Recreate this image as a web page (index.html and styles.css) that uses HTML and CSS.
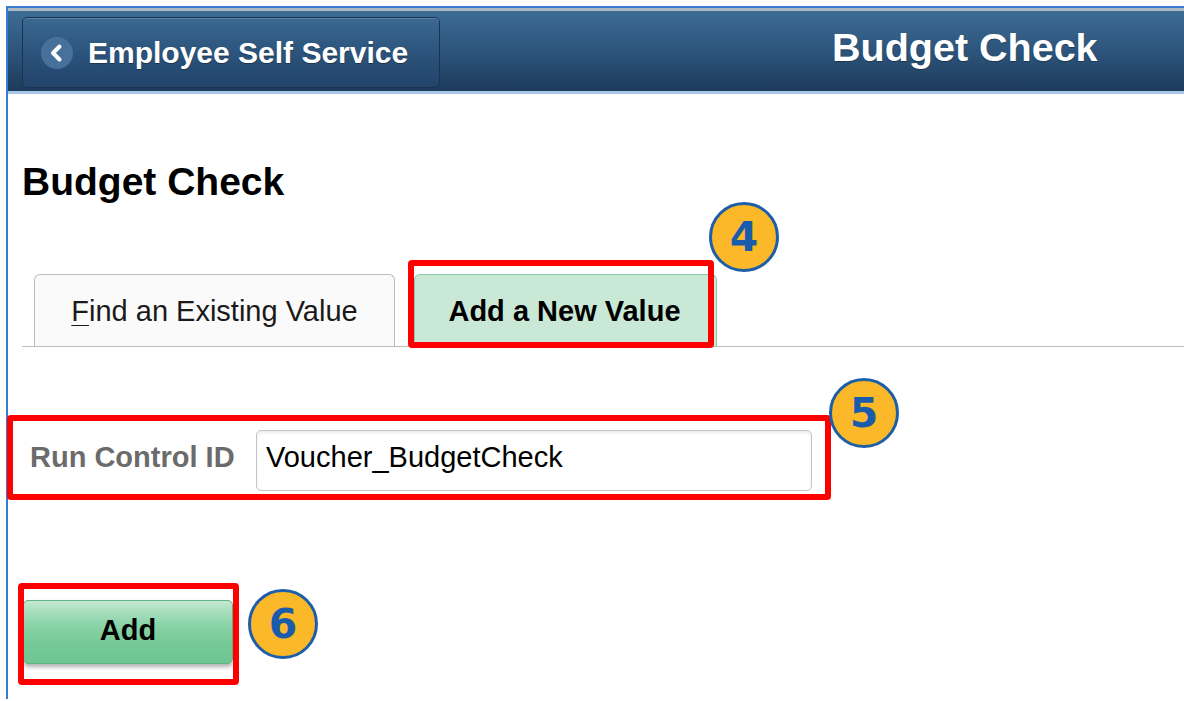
FILE: index.html
```html
<!DOCTYPE html>
<html lang="en">
<head>
<meta charset="utf-8">
<title>Budget Check</title>
<link rel="stylesheet" href="styles.css">
</head>
<body>
<div class="frame">
  <header class="banner">
    <a class="back-btn" href="#">
      <span class="back-icon">
        <svg width="32" height="32" viewBox="0 0 32 32" aria-hidden="true">
          <circle cx="16" cy="16" r="16" fill="#47719a"/>
          <path d="M18.5 9.5 L12 16 L18.5 22.5" fill="none" stroke="#ffffff" stroke-width="4" stroke-linecap="round" stroke-linejoin="round"/>
        </svg>
      </span>
      <span class="back-label">Employee Self Service</span>
    </a>
    <h1 class="banner-title">Budget Check</h1>
  </header>

  <main class="content">
    <h2 class="page-title">Budget Check</h2>

    <div class="tabs">
      <div class="tab"><span class="ak">F</span>ind an Existing Value</div>
      <div class="tab tab-active">Add a New Value
        <span class="callout callout-tab"></span>
        <span class="step step-4">4</span>
      </div>
    </div>

    <div class="field-row">
      <label class="field-label" for="runctl">Run Control ID</label>
      <input class="field-input" id="runctl" type="text" value="Voucher_BudgetCheck">
      <span class="callout callout-field"></span>
      <span class="step step-5">5</span>
    </div>

    <div class="actions">
      <button class="add-btn" type="button">Add</button>
      <span class="callout callout-btn"></span>
      <span class="step step-6">6</span>
    </div>
  </main>
</div>
</body>
</html>
```

FILE: styles.css
```css
html, body {
  margin: 0;
  padding: 0;
  background: #ffffff;
  height: 701px;
  overflow: hidden;
  font-family: "Liberation Sans", Arial, sans-serif;
}

.frame {
  margin: 6px 0 0 6px;
  border-top: 2px solid #3a7bd5;
  border-left: 2px solid #3a7bd5;
  height: 693px;
  box-sizing: border-box;
}

/* top banner */
.banner {
  display: flex;
  align-items: flex-start;
  height: 86px;
  box-sizing: border-box;
  border-top: 3px solid #aeb8c2;
  border-bottom: 3px solid #a9c5e6;
  background: linear-gradient(#3d6c95, #2b5279 55%, #1d3b5b);
}

.back-btn {
  display: flex;
  align-items: center;
  margin: 6px 0 0 14px;
  width: 418px;
  height: 71px;
  box-sizing: border-box;
  border: 1px solid #1a3450;
  border-radius: 5px;
  background: linear-gradient(#3a6890, #2b527a 55%, #22446a);
  box-shadow: inset 0 1px 0 rgba(255, 255, 255, 0.18);
  text-decoration: none;
  padding-left: 18px;
}

.back-icon {
  display: flex;
  width: 32px;
  height: 32px;
}

.back-label {
  margin-left: 15px;
  color: #ffffff;
  font-weight: bold;
  font-size: 30px;
  text-shadow: 0 1px 1px rgba(0, 0, 0, 0.35);
}

.banner-title {
  margin: 17px 0 0 392px;
  font-size: 39.5px;
  line-height: 39px;
  font-weight: bold;
  color: #ffffff;
  text-shadow: 0 1px 1px rgba(0, 0, 0, 0.3);
}

/* page body */
.content {
  padding-top: 68px;
}

.page-title {
  margin: 0 0 0 14px;
  font-size: 39px;
  line-height: 39px;
  font-weight: bold;
  color: #000000;
}

.tabs {
  display: flex;
  align-items: flex-end;
  gap: 19px;
  margin: 73px 0 0 14px;
  padding-left: 12px;
  border-bottom: 1px solid #bdbdbd;
}

.tab {
  position: relative;
  display: flex;
  align-items: center;
  justify-content: center;
  height: 72px;
  box-sizing: border-box;
  border: 1px solid #bcbcbc;
  border-bottom: none;
  border-radius: 6px 6px 0 0;
  background: #fafafa;
  font-size: 29px;
  color: #1a1a1a;
  width: 361px;
  padding-top: 2px;
}

.ak {
  text-decoration: underline;
  text-decoration-thickness: 1px;
  text-underline-offset: 4px;
}

.tab-active {
  width: 303px;
  background: #c9e9d6;
  border-color: #8fcda8;
  font-weight: bold;
  color: #000000;
  padding-right: 2px;
}

/* annotation boxes and step markers */
.callout {
  position: absolute;
  box-sizing: border-box;
  border: 6px solid #ff0000;
  border-radius: 4px;
  pointer-events: none;
}

.callout-tab {
  left: -7px;
  top: -15px;
  width: 306px;
  height: 88px;
}

.step {
  position: absolute;
  width: 70px;
  height: 70px;
  box-sizing: border-box;
  border: 3px solid #1d5ea8;
  border-radius: 50%;
  background: #fbb829;
  color: #1a5cab;
  font-family: "DejaVu Sans", Verdana, sans-serif;
  font-weight: bold;
  font-size: 41px;
  display: flex;
  align-items: center;
  justify-content: center;
  line-height: 1;
}

.step-4 {
  left: 294px;
  top: -73px;
}

.field-row {
  position: relative;
  display: flex;
  align-items: center;
  margin: 83px 0 0 22px;
  height: 61px;
}

.field-label {
  font-size: 29px;
  font-weight: bold;
  color: #6b6b6b;
  padding-bottom: 7px;
  width: 226px;
  flex: none;
}

.field-input {
  width: 556px;
  height: 61px;
  box-sizing: border-box;
  border: 1px solid #c6c6c6;
  border-radius: 5px;
  padding: 0 0 7px 9px;
  font-family: "Liberation Sans", Arial, sans-serif;
  font-size: 29px;
  color: #000000;
  background: #ffffff;
  box-shadow: inset 0 2px 3px rgba(0, 0, 0, 0.08);
  outline: none;
}

.callout-field {
  left: -23px;
  top: -15px;
  width: 824px;
  height: 85px;
}

.step-5 {
  left: 799px;
  top: -52px;
}

.actions {
  position: relative;
  margin: 109px 0 0 15px;
  width: 210px;
}

.add-btn {
  display: block;
  width: 210px;
  height: 64px;
  border: 1px solid #5db382;
  border-radius: 5px;
  background: linear-gradient(#c3e9d1, #8dd4aa 35%, #74c995 70%, #6fc692);
  box-shadow: 0 3px 4px rgba(0, 0, 0, 0.3);
  font-family: "Liberation Sans", Arial, sans-serif;
  font-size: 29px;
  font-weight: bold;
  color: #000000;
  padding: 0 0 4px;
}

.callout-btn {
  left: -5px;
  top: -17px;
  width: 221px;
  height: 102px;
}

.step-6 {
  left: 225px;
  top: -11px;
}
```
